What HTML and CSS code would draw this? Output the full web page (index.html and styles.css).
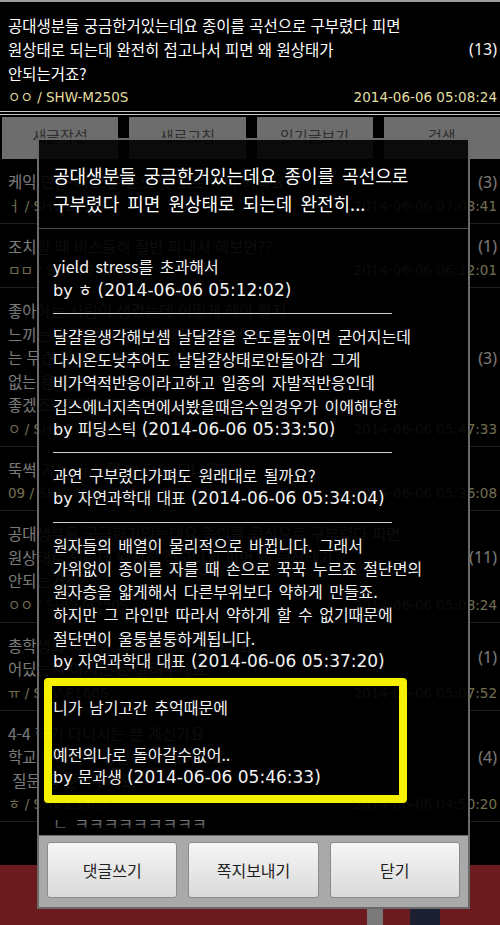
FILE: index.html
```html
<!DOCTYPE html>
<html lang="ko">
<head>
<meta charset="utf-8">
<title>공대생분들 궁금한거있는데요</title>
<link rel="stylesheet" href="styles.css">
</head>
<body>
<div class="page">
  <div class="post post-top">
    <div class="post-title">공대생분들 궁금한거있는데요 종이를 곡선으로 구부렸다 피면<br>원상태로 되는데 완전히 접고나서 피면 왜 원상태가<br>안되는거죠?</div>
    <div class="post-count">(13)</div>
    <div class="post-meta"><span class="author">ㅇㅇ / SHW-M250S</span><span class="date">2014-06-06 05:08:24</span></div>
  </div>

  <div class="screen">
    <div class="tabs">
      <div class="tab">새글작성</div>
      <div class="tab">새로고침</div>
      <div class="tab">인기글보기</div>
      <div class="tab">검색</div>
    </div>

    <div class="list">
      <div class="post row">
        <div class="post-title">케익 만들 때 오븐 온도 몇 도로 해야 되나요?</div>
        <div class="post-count">(3)</div>
        <div class="post-meta"><span class="author">ㅓ / SHV-E210S</span><span class="date">2014-06-06 07:03:41</span></div>
      </div>
      <div class="post row">
        <div class="post-title">조치할 때 비스듬히 절반 파내서 해보면??</div>
        <div class="post-count">(1)</div>
        <div class="post-meta"><span class="author">ㅁㅁ / SHV-E300K</span><span class="date">2014-06-06 06:12:01</span></div>
      </div>
      <div class="post row">
        <div class="post-title">좋아하는 사람이 생겼는데 어떻게 해야 할지<br>느끼는 감정이 너무 복잡해서 모르겠어요 할 수도<br>는 무슨 말을 해야 할지 고민만 하다가 끝나요<br>없는 용기를 내서 한번 말해보는 게<br>좋겠죠? 조언 부탁드려요</div>
        <div class="post-count">(3)</div>
        <div class="post-meta"><span class="author">ㅇ / SHV-E250S</span><span class="date">2014-06-06 05:47:33</span></div>
      </div>
      <div class="post row">
        <div class="post-title">뚝썩 가는 버스 몇 번 타야 되나요?</div>
        <div class="post-meta"><span class="author">09 / SHW-M440S</span><span class="date">2014-06-06 05:36:08</span></div>
      </div>
      <div class="post row">
        <div class="post-title">공대생분들 궁금한거있는데요 종이를 곡선으로 구부렸다 피면<br>원상태로 되는데 완전히 접고나서 피면 왜 원상태가<br>안되는거죠?</div>
        <div class="post-count">(11)</div>
        <div class="post-meta"><span class="author">ㅇㅇ / SHW-M250S</span><span class="date">2014-06-06 05:08:24</span></div>
      </div>
      <div class="post row">
        <div class="post-title">총학생회 사무실 지금 어디로 옮겼나요<br>어딨는지 아시는 분 알려주세요</div>
        <div class="post-count">(1)</div>
        <div class="post-meta"><span class="author">ㅠ / SHV-E160S</span><span class="date">2014-06-06 05:07:52</span></div>
      </div>
      <div class="post row">
        <div class="post-title">4-4 학기 다니시는 분 계신가요<br>학교 다니면서 궁금한 게 있어서요<br>&nbsp;질문 좀 받아주세요</div>
        <div class="post-count">(4)</div>
        <div class="post-meta"><span class="author">ㅎ / SHV-E330S</span><span class="date">2014-06-06 04:50:20</span></div>
      </div>
    </div>

    <div class="banner"><span class="banner-gray"></span><span class="banner-navy"></span></div>

    <div class="dim"></div>

    <div class="dialog">
      <div class="dialog-title">공대생분들 궁금한거있는데요 종이를 곡선으로 구부렸다 피면 원상태로 되는데 완전히...</div>
      <div class="dialog-content">
        <div class="comment">
          <p class="text">yield stress를 초과해서</p>
          <p class="by">by ㅎ <span class="dt">(2014-06-06 05:12:02)</span></p>
        </div>
        <div class="sep"></div>
        <div class="comment">
          <p class="text">달걀을생각해보셈 날달걀을 온도를높이면 굳어지는데<br>다시온도낮추어도 날달걀상태로안돌아감 그게<br>비가역적반응이라고하고 일종의 자발적반응인데<br>깁스에너지측면에서봤을때음수일경우가 이에해당함</p>
          <p class="by">by 피딩스틱 <span class="dt">(2014-06-06 05:33:50)</span></p>
        </div>
        <div class="sep"></div>
        <div class="comment">
          <p class="text">과연 구부렸다가펴도 원래대로 될까요?</p>
          <p class="by">by 자연과학대 대표 <span class="dt">(2014-06-06 05:34:04)</span></p>
        </div>
        <div class="sep"></div>
        <div class="comment">
          <p class="text">원자들의 배열이 물리적으로 바뀝니다. 그래서<br>가위없이 종이를 자를 때 손으로 꾹꾹 누르죠 절단면의<br>원자층을 얇게해서 다른부위보다 약하게 만들죠.<br>하지만 그 라인만 따라서 약하게 할 수 없기때문에<br>절단면이 울퉁불퉁하게됩니다.</p>
          <p class="by">by 자연과학대 대표 <span class="dt">(2014-06-06 05:37:20)</span></p>
        </div>
        <div class="sep"></div>
        <div class="comment">
          <p class="text">니가 남기고간 추억때문에<br><br>예전의나로 돌아갈수없어..</p>
          <p class="by">by 문과생 <span class="dt">(2014-06-06 05:46:33)</span></p>
        </div>
        <div class="sep"></div>
        <div class="comment">
          <p class="text">ㄴ ㅋㅋㅋㅋㅋㅋㅋㅋㅋ</p>
        </div>
        <div class="highlight"></div>
      </div>
      <div class="dialog-buttons">
        <button class="btn" type="button">댓글쓰기</button>
        <button class="btn" type="button">쪽지보내기</button>
        <button class="btn" type="button">닫기</button>
      </div>
    </div>
  </div>
</div>
</body>
</html>
```

FILE: styles.css
```css
* {
  box-sizing: border-box;
  margin: 0;
  padding: 0;
}

html,
body {
  background: #000;
}

body {
  width: 500px;
  height: 925px;
  overflow: hidden;
  font-family: "Noto Sans CJK KR", sans-serif;
  color: #f2f2f2;
}

.page {
  width: 500px;
  height: 925px;
  display: flex;
  flex-direction: column;
}

/* post rows (top item + list) */
.post {
  display: grid;
  grid-template-columns: minmax(0, 1fr) auto;
  column-gap: 6px;
}

.post-title {
  font-size: 15.5px;
  line-height: 23.5px;
  white-space: nowrap;
  overflow: hidden;
  color: #f2f2f2;
}

.post-count {
  font-family: "Noto Sans", sans-serif;
  font-size: 16px;
  align-self: center;
  color: #f2f2f2;
}

.post-meta {
  grid-column: 1 / -1;
  display: flex;
  justify-content: space-between;
  color: #e2dea2;
  font-family: "DejaVu Sans", "Noto Sans CJK KR", sans-serif;
  font-size: 13.5px;
  line-height: 25px;
  white-space: nowrap;
}

.post-top {
  flex: none;
  padding: 11px 3px 4px 8px;
  border-top: 2px solid #9c9c9c;
  border-bottom: 4px double #c9c9c9;
}

.post-top .post-title {
  line-height: 24px;
  color: #fff;
}

.post-top .post-meta {
  line-height: 20px;
  margin-top: 2px;
}

.row {
  padding: 11px 3px 4px 8px;
  border-bottom: 1px solid #3c3c3c;
}

/* app screen under the dialog */
.screen {
  position: relative;
  flex: 1;
  min-height: 0;
  display: flex;
  flex-direction: column;
  overflow: hidden;
}

.tabs {
  flex: none;
  display: grid;
  grid-template-columns: repeat(4, 1fr);
  column-gap: 11px;
  padding: 2px 0 0 2px;
}

.tab {
  height: 42px;
  background: #dadada;
  color: #606060;
  font-size: 15px;
  display: flex;
  align-items: center;
  justify-content: center;
  padding-bottom: 5px;
}

.list {
  flex: 1;
  min-height: 0;
  overflow: hidden;
}

.banner {
  flex: none;
  height: 60px;
  background: #d8383f;
  display: flex;
  align-items: flex-end;
}

.banner-gray {
  width: 16px;
  height: 16px;
  margin-left: 367px;
  background: #f4f4f4;
}

.banner-navy {
  width: 30px;
  height: 16px;
  margin-left: 27px;
  background: #384060;
}

.dim {
  position: absolute;
  inset: 0;
  background: rgba(0, 0, 0, 0.5);
}

/* dialog */
.dialog {
  position: absolute;
  left: 37px;
  top: 23px;
  width: 433px;
  height: 771px;
  border: 2px solid #6a6a6a;
  background: rgba(0, 0, 0, 0.9);
  display: flex;
  flex-direction: column;
}

.dialog-title {
  flex: none;
  padding: 21px 14px 11px;
  font-size: 18px;
  line-height: 28px;
  word-spacing: 3px;
  word-break: keep-all;
  color: #fff;
  border-bottom: 1px solid #4a4a4a;
}

.dialog-content {
  position: relative;
  flex: 1;
  min-height: 0;
  overflow: hidden;
  padding: 26.4px 14px 0;
  font-size: 16px;
  line-height: 23.2px;
  color: #f2f2f2;
}

.dialog-content::after {
  content: "";
  position: absolute;
  left: 0;
  right: 0;
  bottom: 0;
  height: 32px;
  background: linear-gradient(rgba(0, 0, 0, 0), rgba(0, 0, 0, 0.92));
}

.text {
  white-space: nowrap;
  word-spacing: 2px;
}

.by {
  white-space: nowrap;
  font-family: "DejaVu Sans", "Noto Sans CJK KR", sans-serif;
}

.dt {
  font-size: 17px;
  line-height: 1;
}

.sep {
  width: 339px;
  height: 1px;
  margin: 11px 0 11.2px;
  background: #cfcfcf;
}

.highlight {
  position: absolute;
  left: 5px;
  top: 449px;
  width: 363px;
  height: 125px;
  border: 8px solid #f4f000;
  border-radius: 4px;
}

.dialog-buttons {
  flex: none;
  height: 72px;
  background: #a9a9a9;
  border-top: 1px solid #6e6e6e;
  display: grid;
  grid-template-columns: repeat(3, 1fr);
  column-gap: 11px;
  padding: 6px 8px 9px;
}

.btn {
  border: 1px solid #8a8a8a;
  border-radius: 3px;
  background: linear-gradient(#f6f6f6, #d9d9d9);
  font-family: "Noto Sans CJK KR", sans-serif;
  font-size: 16px;
  color: #1e1e1e;
  display: flex;
  align-items: center;
  justify-content: center;
}
```
